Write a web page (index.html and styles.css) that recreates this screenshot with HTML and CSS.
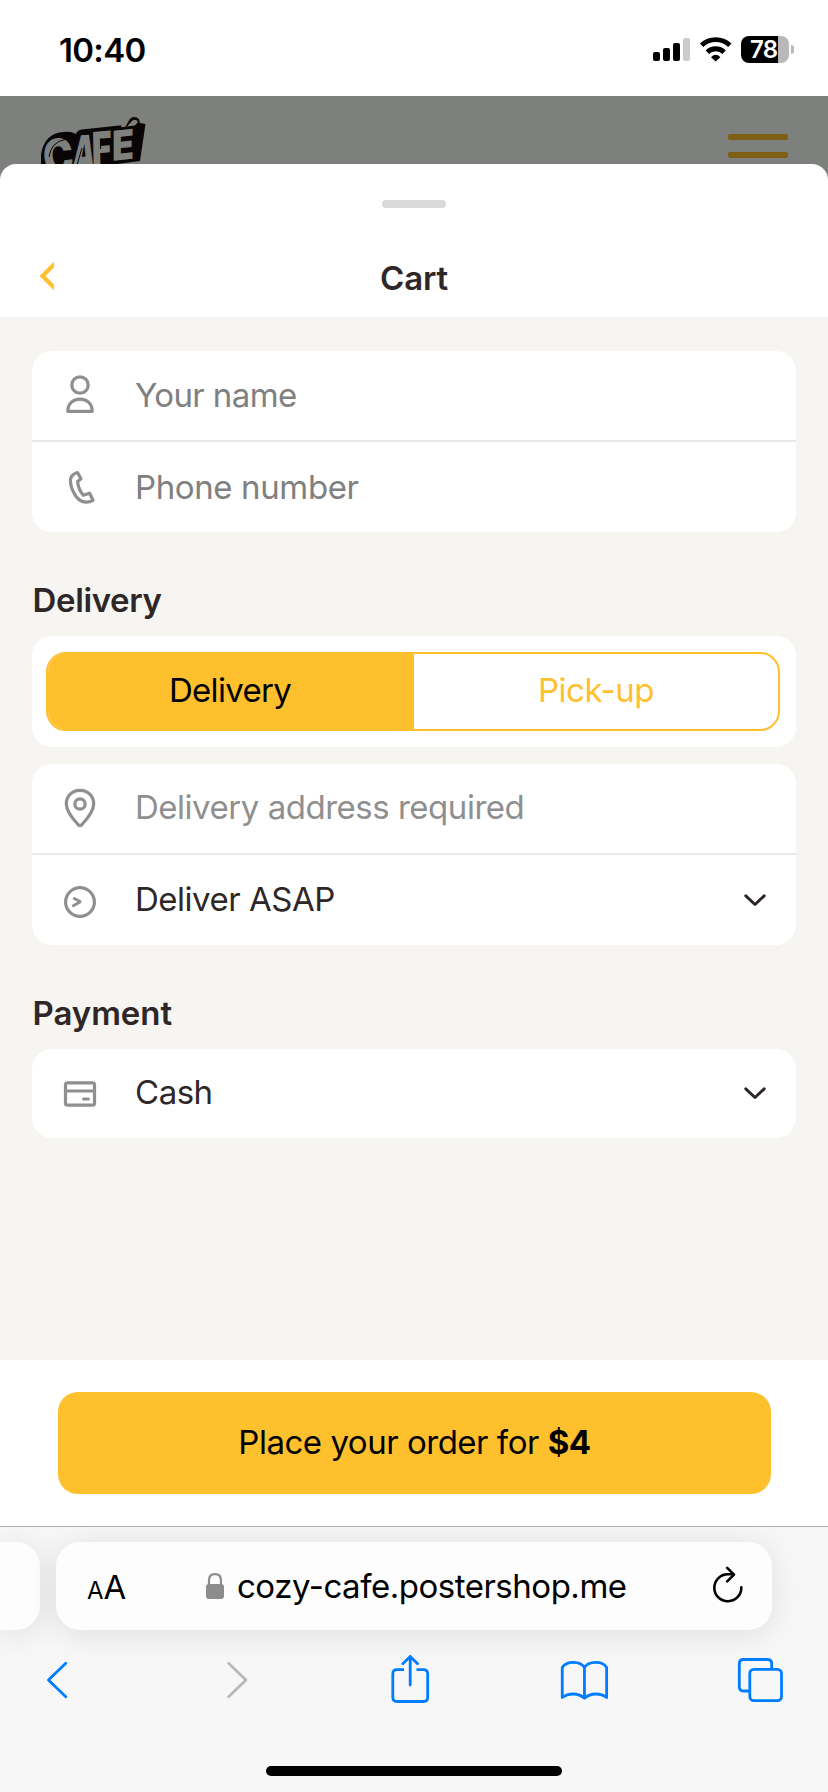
FILE: index.html
```html
<!DOCTYPE html>
<html lang="en">
<head>
<meta charset="utf-8">
<title>Cart</title>
<link rel="stylesheet" href="styles.css">
</head>
<body>
<div class="screen">
  <div class="status">
    <span class="time">10:40</span>
    <div class="indicators">
      <svg class="signal" viewBox="653 36 37 27"><rect x="653" y="52" width="7" height="9" rx="2"/><rect x="663" y="48" width="7" height="13" rx="2"/><rect x="673" y="43" width="7" height="18" rx="2"/><rect x="683" y="38" width="7" height="23" rx="2" fill="#cbcbcb"/></svg>
      <svg class="wifi" viewBox="699 36 34 27"><g fill="none" stroke="#000" stroke-width="4.8"><path d="M701.6 45.2A20.5 20.5 0 0 1 729.8 45.2"/><path d="M707.3 52.2A12 12 0 0 1 724.1 52.2"/></g><path d="M711 57.2Q715.7 52.4 720.4 57.2L715.7 61.6Z"/></svg>
      <div class="battery"><span class="level">78</span></div>
      <span class="nub"></span>
    </div>
  </div>

  <div class="backdrop">
    <svg class="logo" viewBox="36 112 114 76">
      <path d="M41 188V155Q44 133 64 132Q71 131 76 134Q77 130 82 129.500L124 125L131 118Q135 115.500 139 119L140 123L145.500 124L140 161L102 166L90 188Z" fill="#090506"/>
      <g class="logo-text">
        <text transform="translate(45 175) rotate(-6) scale(.84 1)" font-size="48">C</text>
        <text transform="translate(71 172) rotate(-5) skewX(-9) scale(.6 1)" font-size="49">A</text>
        <text transform="translate(92 165) rotate(-5) skewX(-4) scale(.76 1)" font-size="45">F</text>
        <text transform="translate(112 161) rotate(-6) skewX(-6) scale(.88 1)" font-size="41">É</text>
      </g>
      <path d="M127 126.500L132.500 120.500Q136 118.500 138 122L135 125.500Z" fill="#7e807e"/>
      <path d="M49 157Q51 142 65 139.500M101 138L100.500 149M82 148L77 165" fill="none" stroke="#090506" stroke-width="1"/>
    </svg>
    <div class="burger"><i></i><i></i></div>
  </div>

  <main class="sheet">
    <header class="sheet-head">
      <span class="grabber"></span>
      <div class="title-row">
        <svg class="back" viewBox="38 258 16 36"><path d="M57 261.500L42.500 276L57 290.500" fill="none" stroke="#ffc02e" stroke-width="4.200"/></svg>
        <h1 class="title">Cart</h1>
      </div>
    </header>

    <div class="content">
      <section class="card">
        <div class="row raised">
          <svg class="icon" viewBox="56 372 48 48"><circle cx="80" cy="385" r="8.200"/><path d="M67.800 411.300C67.800 403.500 73 399.200 80 399.200S92.200 403.500 92.200 411.300Z"/></svg>
          <span class="placeholder name">Your name</span>
        </div>
        <div class="row ruled">
          <svg class="icon" viewBox="56 463 48 48"><path d="M77.500 472.500L81 478.800L77.600 481.600Q78.300 489.500 83.300 495.200L89.600 493.200L93 500.300Q89 502.400 85.800 502.200Q80 502 75.800 496Q70.500 488 70.400 481Q70.500 474.500 77.500 472.500Z"/></svg>
          <span class="placeholder phone">Phone number</span>
        </div>
      </section>

      <h2 class="heading delivery-heading">Delivery</h2>
      <section class="card segment-card">
        <div class="segments">
          <span class="segment active">Delivery</span>
          <span class="segment pickup">Pick-up</span>
        </div>
      </section>
      <section class="card address-card">
        <div class="row raised">
          <svg class="icon" viewBox="56 785 48 48"><circle cx="80" cy="804" r="5.200"/><path d="M80 790.300C87.800 790.300 93.700 796 93.700 804C93.700 811 88 818 82 824.500Q80 826.500 78 824.500C72 818 66.300 811 66.300 804C66.300 796 72.200 790.300 80 790.300Z"/></svg>
          <span class="hint">Delivery address required</span>
        </div>
        <div class="row ruled raised">
          <svg class="icon" viewBox="56 876 48 48"><circle cx="80" cy="902" r="14.400"/><path d="M74.300 898.500L80 901.600M80 902L73.300 905.700" stroke-width="2.800"/></svg>
          <span class="value asap">Deliver ASAP</span>
          <svg class="chevron" viewBox="743 890 24 20"><path d="M745.800 895.800L755 904.500L764.200 895.800"/></svg>
        </div>
      </section>

      <h2 class="heading payment-heading">Payment</h2>
      <section class="card">
        <div class="row raised">
          <svg class="icon" viewBox="56 1070 48 48"><rect x="65.500" y="1082.800" width="29" height="22.400" rx="2"/><path d="M65.500 1091H94.500M83.500 1099H88.500" stroke-width="3"/></svg>
          <span class="value cash">Cash</span>
          <svg class="chevron" viewBox="743 891 24 20"><path d="M745.800 895.800L755 904.500L764.200 895.800"/></svg>
        </div>
      </section>
    </div>

    <footer class="footer">
      <div class="order">Place your order for <b>$4</b></div>
    </footer>
  </main>

  <div class="browser">
    <div class="tabs-strip">
      <span class="prev-tab"></span>
      <div class="address">
        <span class="reader"><span class="small-a">A</span><span class="big-a">A</span></span>
        <svg class="lock" viewBox="206 1572 18 28"><rect x="206" y="1584" width="18" height="15" rx="3" fill="#8c8c8c"/><path d="M209 1585V1580.500Q209 1574.200 215 1574.200T221 1580.500V1585" fill="none" stroke="#8c8c8c" stroke-width="2.200"/></svg>
        <span class="url">cozy-cafe.postershop.me</span>
        <svg class="reload" viewBox="711 1566 34 40"><g fill="none" stroke="#000" stroke-width="2.600" stroke-linecap="round" stroke-linejoin="round"><path d="M741.300 1587.200A13.500 13.500 0 1 1 727.800 1574.300H733.500"/><path d="M727.200 1567.800L734 1574.600L727.200 1581.400"/></g></svg>
      </div>
    </div>
    <nav class="tools">
      <svg class="tool" viewBox="27 1650 60 60"><path d="M65.800 1663.200L48.500 1680L65.800 1696.800"/></svg>
      <svg class="tool disabled" viewBox="202.750 1650 60 60"><path d="M228.400 1663.200L245.700 1680L228.400 1696.800"/></svg>
      <svg class="tool" viewBox="378.500 1650 60 60"><path stroke-linecap="butt" d="M403.500 1669.600H396.500Q392.300 1669.600 392.300 1673.800V1697.300Q392.300 1701.500 396.500 1701.500H423Q427.200 1701.500 427.200 1697.300V1673.800Q427.200 1669.600 423 1669.600H416"/><path d="M409.700 1685V1656.500M402.300 1663.800L409.700 1656.400L417.100 1663.800"/></svg>
      <svg class="tool" viewBox="554.250 1650 60 60"><path d="M584.700 1698.200V1667.500Q582 1662.400 573.500 1662.300Q565.500 1662.300 562.500 1667.500V1697.500Q567 1694 573.500 1694T584.700 1698.200Q589.400 1694 596 1694T606.900 1697.500V1667.500Q604 1662.300 596 1662.300Q587.400 1662.400 584.700 1667.500"/></svg>
      <svg class="tool" viewBox="730 1650 60 60"><path d="M748.500 1691H743.500Q739.300 1691 739.300 1686.800V1663.700Q739.300 1659.500 743.500 1659.500H767.500Q771.700 1659.500 771.700 1663.700V1668.500"/><rect x="749.800" y="1669.300" width="31.700" height="31.300" rx="4"/></svg>
    </nav>
    <span class="home"></span>
  </div>
</div>
</body>
</html>
```
FILE: styles.css
```css
* { box-sizing: border-box; }
body { margin: 0; background: #fff; color: #2f2727; font: 400 33px/40px Inter, "Liberation Sans", sans-serif; letter-spacing: -.48px; }
svg { display: block; flex: none; }
.screen { width: 828px; height: 1792px; overflow: hidden; display: flex; flex-direction: column; }

.status { height: 96px; flex: none; padding: 0 34px 0 59px; display: flex; justify-content: space-between; align-items: flex-start; color: #000; }
.time { margin-top: 30px; font-weight: 600; letter-spacing: -.7px; }
.indicators { display: flex; align-items: center; margin-top: 36px; height: 27px; }
.signal { width: 37px; height: 27px; }
.wifi { width: 34px; height: 27px; margin-left: 9px; }
.battery { width: 48px; height: 27px; margin-left: 8px; border-radius: 8px; overflow: hidden; background: linear-gradient(to right, #000 37px, #b8b8b8 37px); }
.level { display: block; padding-left: 9px; font-size: 24px; line-height: 27px; font-weight: 600; color: #fff; letter-spacing: -.7px; }
.nub { width: 3px; height: 9px; margin-left: 2px; border-radius: 0 3px 3px 0; background: #b8b8b8; }

.backdrop { height: 90px; margin-bottom: -22px; flex: none; padding: 16px 40px 0 36px; background: #7e807e; display: flex; justify-content: space-between; overflow: hidden; }
.logo { width: 114px; height: 76px; }
.logo-text { font-family: Inter, sans-serif; font-weight: 900; fill: #7e807e; }
.burger { width: 60px; padding-top: 22px; display: flex; flex-direction: column; gap: 12px; }
.burger i { height: 6px; border-radius: 2px; background: #7e5f16; }

.sheet { position: relative; height: 1362px; flex: none; display: flex; flex-direction: column; background: #fff; border-radius: 16px 16px 0 0; overflow: hidden; }
.sheet-head { height: 153px; flex: none; padding-top: 36px; display: flex; flex-direction: column; align-items: center; }
.grabber { width: 64px; height: 8px; border-radius: 4px; background: #dadada; }
.title-row { width: 100%; height: 78px; margin-top: 31px; padding: 0 54px 0 38px; display: flex; align-items: center; }
.back { width: 16px; height: 36px; margin-top: -4px; }
.title { flex: 1; margin: 0; text-align: center; font-size: 33px; line-height: 40px; font-weight: 600; letter-spacing: -.2px; }

.content { flex: 1; padding: 34px 32px 0; background: #f6f5f1; }
.card { background: #fff; border-radius: 20px; overflow: hidden; }
.row { height: 89px; padding: 0 29px 0 24px; display: flex; align-items: center; }
.ruled { height: 92px; border-top: 2px solid #e8e8e8; }
.row > span { margin-left: 31px; flex: 1; white-space: nowrap; }
.raised > span { padding-bottom: 2px; }
.raised > .hint, .raised > .cash { padding-bottom: 3px; }
.icon { width: 48px; height: 48px; fill: none; stroke: #8f8f8f; stroke-width: 3.2; stroke-linejoin: round; stroke-linecap: round; }
.chevron { width: 24px; height: 20px; fill: none; stroke: #2f2727; stroke-width: 3; stroke-linecap: round; stroke-linejoin: round; }
.placeholder { color: #808080; }
.name { letter-spacing: -.6px; }
.phone { letter-spacing: -.38px; }
.hint { color: #8f8f8f; }
.heading { margin: 0; padding-left: .5px; font-size: 33px; line-height: 40px; font-weight: 600; }
.delivery-heading { margin-top: 48px; margin-bottom: 16px; letter-spacing: -.35px; }
.payment-heading { margin-top: 48px; margin-bottom: 16px; letter-spacing: -.05px; }
.segment-card { height: 111px; padding: 16px 16px 16px 14px; }
.segments { height: 79px; display: flex; border: 2px solid #ffc02e; border-radius: 20px; overflow: hidden; }
.segment { flex: 1; display: flex; justify-content: center; align-items: center; padding-bottom: 4px; color: #ffc02e; }
.segment.active { background: #ffc02e; color: #000; padding-right: 2px; letter-spacing: -.7px; }
.address-card { margin-top: 17px; }

.footer { height: 166px; flex: none; padding: 32px 57px 0 58px; }
.order { height: 102px; padding-top: 30px; border-radius: 20px; background: #ffc02e; color: #000; text-align: center; white-space: nowrap; }
.order b { font-weight: 700; }

.browser { flex: 1; border-top: 1px solid #b0b0b0; background: #f7f7f7; padding-top: 15px; display: flex; flex-direction: column; align-items: center; color: #000; }
.tabs-strip { width: 828px; display: flex; gap: 16px; }
.prev-tab { width: 40px; height: 88px; border-radius: 0 24px 24px 0; background: #fdfdfd; box-shadow: 0 4px 32px rgba(0, 0, 0, .1); }
.address { width: 716px; height: 88px; border-radius: 24px; padding: 0 26px 0 31px; display: flex; align-items: center; background: #fdfdfd; box-shadow: 0 4px 32px rgba(0, 0, 0, .1); }
.reader { width: 119px; padding-top: 5px; display: flex; align-items: baseline; letter-spacing: 0; }
.small-a { font-size: 24px; }
.big-a { font-size: 33px; }
.lock { width: 18px; height: 28px; }
.url { margin-left: 13px; flex: 1; white-space: nowrap; }
.reload { width: 34px; height: 40px; margin-right: 1px; }
.tools { width: 828px; height: 60px; margin-top: 20px; padding: 0 38px 0 27px; display: flex; justify-content: space-between; }
.tool { width: 60px; height: 60px; fill: none; stroke: #007dff; stroke-width: 2.8; stroke-linecap: round; stroke-linejoin: round; }
.disabled { stroke: #b8b8b8; }
.home { width: 296px; height: 10px; margin-top: 56px; border-radius: 5px; background: #000; }
```
